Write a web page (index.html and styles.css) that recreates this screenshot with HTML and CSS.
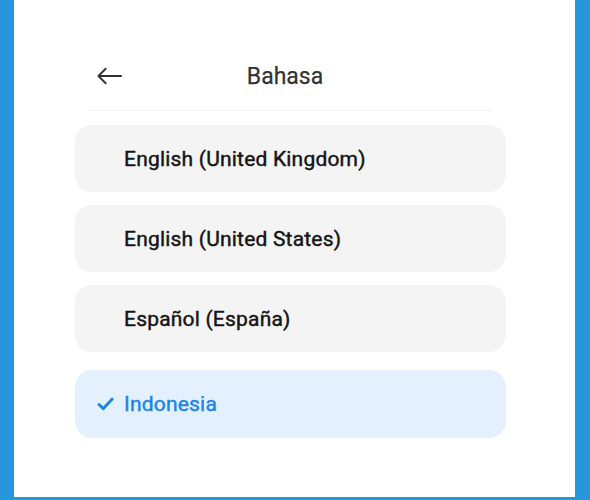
FILE: index.html
```html
<!DOCTYPE html>
<html lang="id">
<head>
<meta charset="utf-8">
<link rel="stylesheet" href="styles.css">
</head>
<body>
<div class="panel">
  <div class="header">
    <button class="back" aria-label="Kembali">
      <svg width="26" height="18" viewBox="0 0 26 18" fill="none" stroke="#333" stroke-width="2" stroke-linecap="round" stroke-linejoin="round">
        <path d="M25 9H2"/>
        <path d="M9 1.5L1.5 9L9 16.5"/>
      </svg>
    </button>
    <div class="title">Bahasa</div>
    <div class="spacer"></div>
  </div>
  <ul class="list">
    <li class="item">English (United Kingdom)</li>
    <li class="item">English (United States)</li>
    <li class="item">Español (España)</li>
    <li class="item selected">
      <svg class="check" width="17" height="14" viewBox="0 0 17 14" fill="none" stroke="#1b86e6" stroke-width="3" stroke-linecap="round" stroke-linejoin="round">
        <path d="M2 7.5L6.3 11.6L15 2.2"/>
      </svg>
      Indonesia
    </li>
  </ul>
</div>
</body>
</html>
```

FILE: styles.css
```css
html, body {
  margin: 0;
  padding: 0;
}
body {
  background: #2896da;
  width: 590px;
  height: 500px;
  font-family: Roboto, "Noto Sans", sans-serif;
}
.panel {
  margin: 0 15px 0 14px;
  height: 497px;
  background: #ffffff;
  box-sizing: border-box;
  padding-top: 56px;
}
.header {
  margin: 0 83px 0 74px;
  display: flex;
  align-items: center;
  height: 40px;
  border-bottom: 1px solid #f1f1f1;
  padding-bottom: 14px;
}
.back {
  width: 34px;
  height: 40px;
  padding: 0 0 0 9px;
  border: 0;
  background: none;
  display: flex;
  align-items: center;
  justify-content: flex-start;
}
.title {
  flex: 1;
  text-align: center;
  font-size: 23px;
  font-weight: 400;
  color: #333333;
  -webkit-text-stroke: 0.25px #333333;
}
.spacer {
  width: 44px;
}
.list {
  list-style: none;
  margin: 14px 0 0 61px;
  padding: 0;
  width: 431px;
  display: flex;
  flex-direction: column;
  gap: 13px;
}
.item {
  height: 67px;
  box-sizing: border-box;
  border-radius: 17px;
  background: #f4f4f4;
  display: flex;
  align-items: center;
  padding-left: 49px;
  font-size: 21px;
  font-weight: 400;
  letter-spacing: 0.2px;
  color: #161616;
  -webkit-text-stroke: 0.45px #161616;
}
.item.selected {
  margin-top: 5px;
  background: #e4f0fd;
  color: #1b86e6;
  -webkit-text-stroke: 0.45px #1b86e6;
  padding-left: 22px;
  height: 68px;
}
.check {
  margin-right: 10px;
}
```
